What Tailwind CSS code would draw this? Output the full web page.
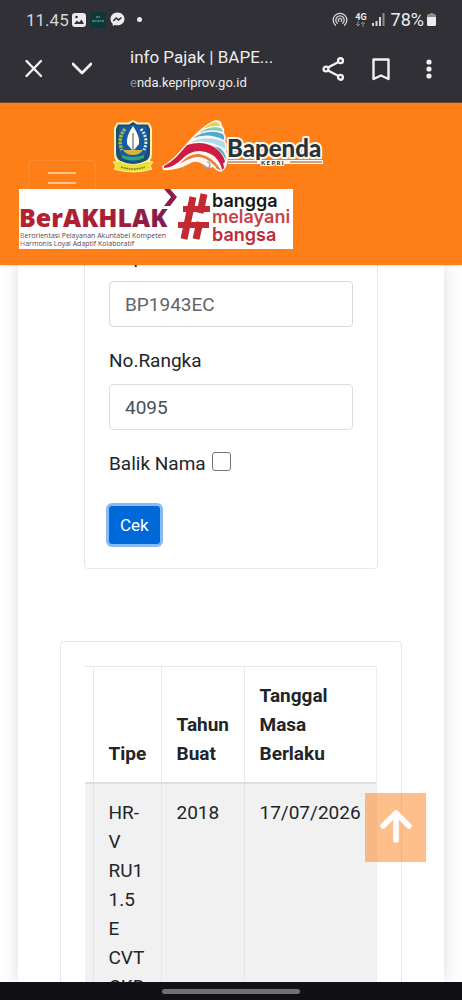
<!DOCTYPE html>
<html lang="id">
<head>
  <meta charset="UTF-8" />
  <meta name="viewport" content="width=device-width, initial-scale=1.0" />
  <title>info Pajak | BAPENDA</title>
  <script src="https://cdn.jsdelivr.net/npm/@tailwindcss/browser@4"></script>
</head>
<body class="h-screen flex flex-col overflow-hidden bg-white font-[Roboto,sans-serif] text-[19px] leading-[29px] text-[#212529]">

  <!-- Phone status + browser bar -->
  <div class="shrink-0 h-[103px] bg-[#303036] text-[#ececee] border-b border-[#6b4630]">
    <div class="h-[39px] flex items-center px-[26px] text-[17px] leading-5">
      <span class="text-[#d6d6d8]">11.45</span>
      <svg class="ml-[3px] w-[14px] h-[14px]" viewBox="0 0 14 14">
        <rect width="14" height="14" rx="3" fill="#ececee"/>
        <path d="M2 11 L5 7.500 L7 9.500 L9.500 6.500 L12 11Z" fill="#303036"/>
        <circle cx="4.500" cy="4" r="1.300" fill="#303036"/>
      </svg>
      <svg class="ml-1 w-4 h-4" viewBox="0 0 16 16">
        <rect width="16" height="16" rx="2" fill="#0c3a38"/>
        <path d="M6 5H10M2 9H14" stroke="#8fb5b0" stroke-width="1" stroke-dasharray="2 .5"/>
      </svg>
      <svg class="ml-1 w-[15px] h-[15px]" viewBox="0 0 15 15">
        <path d="M7.500 .5C3.500 .5 .5 3.400 .5 7c0 2 .8 3.600 2.200 4.800V14l2-1.100c.9.300 1.800.4 2.800.4 4 0 7-2.700 7-6.300S11.500.5 7.500.5Z" fill="#ececee"/>
        <path d="M3.300 9 L6.200 6 L8.500 7.900 L11.500 5.500" fill="none" stroke="#303036" stroke-width="1.600"/>
      </svg>
      <span class="ml-3 w-[5px] h-[5px] rounded-full bg-[#ececee]"></span>

      <svg class="ml-auto w-4 h-4" viewBox="0 0 16 16" fill="none" stroke="#d6d6d8" stroke-width="1.300" stroke-linecap="round">
        <path d="M3.500 13.200A6.800 6.800 0 1 1 12.500 13.200"/>
        <path d="M5.300 11.300A4.200 4.200 0 1 1 10.700 11.300"/>
        <path d="M6.800 9.300A1.700 1.700 0 1 1 9.200 9.300"/>
      </svg>
      <div class="ml-[7px] flex flex-col items-center">
        <span class="text-[9px] leading-[8px] font-bold">4G</span>
        <svg class="w-[11px] h-[6px]" viewBox="0 0 11 6" fill="none" stroke="#8b8b90" stroke-width="1">
          <path d="M3 0V5M1 3L3 5L5 3M8 6V1M6 3L8 1L10 3"/>
        </svg>
      </div>
      <svg class="ml-[5px] w-[13px] h-[13px]" viewBox="0 0 13 13">
        <path d="M0 10h2v3H0zM3.500 8h2v5h-2zM7 4h2v9H7z" fill="#d6d6d8"/>
        <path d="M10.500 0h2v13h-2z" fill="#8b8b90"/>
      </svg>
      <span class="ml-[6px] text-[18px]">78%</span>
      <svg class="ml-[3px] w-[9px] h-[13px]" viewBox="0 0 9 13">
        <path d="M3 0h3v1.500h1.500A1.500 1.500 0 0 1 9 3v8.500A1.500 1.500 0 0 1 7.500 13h-6A1.500 1.500 0 0 1 0 11.500V3A1.500 1.500 0 0 1 1.500 1.500H3Z" fill="#ececee"/>
        <path d="M3 0h3v1.500h1.500A1.500 1.500 0 0 1 9 3v1H0V3A1.500 1.500 0 0 1 1.500 1.500H3Z" fill="#8b8b90"/>
      </svg>
    </div>

    <div class="h-[60px] flex items-center pl-6 pr-[30px]">
      <button type="button" aria-label="Tutup">
        <svg class="w-5 h-5" viewBox="0 0 20 20" fill="none" stroke="#f2f2f4" stroke-width="2.400" stroke-linecap="round">
          <path d="M2.500 2L17 17M17 2L2.500 17"/>
        </svg>
      </button>
      <button type="button" aria-label="Perkecil" class="ml-7">
        <svg class="w-5 h-5" viewBox="0 0 20 20" fill="none" stroke="#f2f2f4" stroke-width="2.800" stroke-linecap="round" stroke-linejoin="round">
          <path d="M1 5L10 14L19 5"/>
        </svg>
      </button>
      <div class="ml-[38px] flex-1 min-w-0">
        <p class="text-[17px] leading-7 whitespace-nowrap">info Pajak | BAPE...</p>
        <p class="text-[13px] leading-6 whitespace-nowrap"><span class="text-[#8b8b90]">e</span>nda.kepriprov.go.id</p>
      </div>
      <div class="flex items-center">
        <button type="button" aria-label="Bagikan">
          <svg class="w-6 h-6" viewBox="0 0 24 24" fill="none" stroke="#f2f2f4" stroke-width="2.400">
            <path d="M6 10.500L16.500 5M6 13.500L16.500 19"/>
            <circle cx="4" cy="12" r="2.400"/><circle cx="18.500" cy="3.700" r="2.400"/><circle cx="18.500" cy="20.300" r="2.400"/>
          </svg>
        </button>
        <button type="button" aria-label="Simpan" class="ml-[26px]">
          <svg class="w-[18px] h-6" viewBox="0 0 18 24" fill="none" stroke="#f2f2f4" stroke-width="2.400">
            <path d="M1.500 2.500H16.500V22L9 18.500L1.500 22Z" stroke-linejoin="round"/>
          </svg>
        </button>
        <button type="button" aria-label="Menu" class="ml-9">
          <svg class="w-[6px] h-6" viewBox="0 0 6 24" fill="#f2f2f4">
            <circle cx="3" cy="5" r="2.600"/><circle cx="3" cy="12" r="2.600"/><circle cx="3" cy="19" r="2.600"/>
          </svg>
        </button>
      </div>
    </div>
  </div>

  <!-- Site header -->
  <header class="relative z-10 shrink-0 bg-[#fe7f17] pt-4 pb-4 pr-[26px] shadow-sm">
    <button type="button" aria-label="Navigasi" class="absolute left-7 top-[57px] w-[68px] h-[50px] rounded border border-white/10 flex flex-col items-center gap-2 pt-[11px]">
      <span class="w-7 h-[2px] bg-[#ffc48c]"></span>
      <span class="w-7 h-[2px] bg-[#ffc48c]"></span>
    </button>

    <a href="#" class="flex justify-center" aria-label="Bapenda Kepri">
      <!-- Province crest -->
      <svg class="w-[42px] h-[54px]" viewBox="0 0 42 54">
        <path d="M21 1L26 3.500H37L40 9V35Q40 43 32 46L21 51L10 46Q2 43 2 35V9L5 3.500H16Z" fill="#f5f0b8"/>
        <path d="M21 3L25 5.500H36L38 10V34Q38 41 31 43L21 47L11 43Q4 41 4 34V10L6 5.500H17Z" fill="#1c4f6e"/>
        <path d="M21 6L35 8V32Q34 40 21 43Q8 40 7 32V8Z" fill="#165aa3"/>
        <path d="M13 10Q5 20 10 31" fill="none" stroke="#a3bd3a" stroke-width="3.500" stroke-dasharray="2.500 1"/>
        <path d="M29 10Q37 20 32 31" fill="none" stroke="#e8eee0" stroke-width="3" stroke-dasharray="2 1.500"/>
        <path d="M21 7Q14 17 15 25L20 31H22L27 25Q28 17 21 7Z" fill="#fffbe8"/>
        <path d="M21 14V31" stroke="#165aa3" stroke-width="1"/>
        <path d="M11 31H31Q28 36 21 36T11 31Z" fill="#d9b43a"/>
        <path d="M10 36Q21 40 32 36V39Q21 44 10 39Z" fill="#34a37c"/>
        <path d="M1 43L7 42Q21 49 35 42L41 43L38 47L40 50Q21 56 2 50L4 47Z" fill="#eee030" stroke="#f8f3b0" stroke-width="1"/>
        <path d="M9 48Q21 52 33 48" fill="none" stroke="#7c8a24" stroke-width="1.500" stroke-dasharray="2 .6"/>
      </svg>
      <!-- Bapenda mark -->
      <svg class="ml-2 w-[162px] h-[54px]" viewBox="0 0 162 54">
        <path d="M0 47C9 43 17 33 25 24C33 15 44 4 54 1Q60 1 60 7Q63 10 62 14Q65 18 63 22Q66 27 64 32Q67 39 65 45Q63 51 59 53Q54 52 51 48Q46 50 42 46Q34 40 27 45Q14 52 1 51Z" fill="#fff8f2"/>
        <path d="M41 10Q47 4 54 3Q58 4 58 7Q49 6 41 10Z" fill="#d8d64a"/>
        <path d="M37 14Q48 6 59 9Q61 11 61 13Q48 9 37 14Z" fill="#8fc8b4"/>
        <path d="M31 19Q46 9 61 15Q63 18 62 21Q47 13 31 19Z" fill="#4fa9d6"/>
        <path d="M27 24Q45 15 62 23Q64 27 63 30Q46 19 27 24Z" fill="#a9dcee"/>
        <path d="M2 47C12 42 18 34 25 26Q40 21 52 28Q60 33 63 42Q62 46 59 43Q50 33 38 32Q27 32 19 41Q12 48 2 49Z" fill="#cc1c42"/>
        <path d="M58 29Q64 34 64 41Q60 33 52 27Z" fill="#57b4dc"/>
        <path d="M18 45Q27 34 37 35Q50 37 59 51Q55 51 53 47Q43 37 35 38Q27 39 18 45Z" fill="#ef7b35"/>
        <path d="M56 38Q62 43 62 49L60 51Q59 44 53 38Z" fill="#c31f48"/>
        <path d="M45 43a3 3 0 1 1-3 3" fill="none" stroke="#8fa0c8" stroke-width="1.200"/>
        <text x="65" y="38" font-family="Lato, sans-serif" font-weight="900" font-size="24" fill="#24333d" stroke="#fff8ee" stroke-width="4" paint-order="stroke" stroke-linejoin="round">Bapenda</text>
        <path d="M66 43H161" stroke="#fff8ee" stroke-width="4"/>
        <path d="M66 43H95M128 43H160" stroke="#8c4d33" stroke-width="1"/>
        <text x="99" y="46" font-family="Lato, sans-serif" font-weight="900" font-size="6" fill="#24333d" stroke="#fff8ee" stroke-width="2" paint-order="stroke">K E P R I</text>
      </svg>
    </a>

    <!-- BerAKHLAK banner -->
    <svg class="relative mt-4 ml-[19px] w-[274px] h-[60px]" viewBox="0 0 274 60" role="img" aria-label="BerAKHLAK bangga melayani bangsa">
      <defs>
        <linearGradient id="akhlak" x1="0" x2="1">
          <stop offset="0" stop-color="#b52233"/>
          <stop offset=".6" stop-color="#a81f36"/>
          <stop offset="1" stop-color="#801a51"/>
        </linearGradient>
      </defs>
      <rect width="274" height="60" fill="#fff"/>
      <text x="0" y="38" font-family="Open Sans, sans-serif" font-weight="800" font-size="25" fill="url(#akhlak)">BerAKHLAK</text>
      <path d="M145 0H151L158 8L151 17H145L152 8Z" fill="#8d1b4b"/>
      <g font-family="Open Sans, sans-serif" font-size="7" fill="#5b4548">
        <text x="1" y="49"><tspan fill="#c84a55">B</tspan>erorientasi Pelayanan Akuntabel Kompeten</text>
        <text x="1" y="57"><tspan fill="#c84a55">H</tspan>armonis Loyal Adaptif Kolaboratif</text>
      </g>
      <!-- hash sign -->
      <path d="M174 8L165 50M185 5L181 24M181 33L177 50" fill="none" stroke="#c42830" stroke-width="7"/>
      <path d="M164 20H191M159 36H190" fill="none" stroke="#c42830" stroke-width="6"/>
      <g font-family="Inter, sans-serif" font-weight="600" font-size="18">
        <text x="193" y="18" fill="#171717">bangga</text>
        <text x="193" y="34" fill="#c8424a">melayani</text>
        <text x="193" y="52" fill="#bf2b35">bangsa</text>
      </g>
    </svg>
  </header>

  <!-- Page content, scrolled under the header -->
  <main class="flex-1 min-h-0 overflow-hidden bg-white px-[18px]">
    <div class="h-full bg-white shadow-[0_0_16px_rgba(0,0,0,0.15)]">
      <div class="px-[42px]">
        <form class="relative -top-12 -mb-12 mx-6 px-6 pt-6 pb-6 border border-[#e7e7e7] rounded" onsubmit="return false">
          <label for="nopol" class="block">Nopol</label>
          <input id="nopol" type="text" value="BP1943EC" class="mt-[10px] block w-full h-[46px] px-[15px] border border-[#d5d9dd] rounded bg-white text-[#5f6468] outline-none" />
          <label for="rangka" class="mt-[19px] block">No.Rangka</label>
          <input id="rangka" type="text" value="4095" class="mt-[9px] block w-full h-[46px] px-[15px] border border-[#dcdfe2] rounded bg-white text-[#495057] outline-none" />
          <div class="mt-[19px] flex items-center">
            <label for="balik">Balik Nama</label>
            <input id="balik" type="checkbox" class="ml-[6px] mb-1 w-[19px] h-[19px] appearance-none border border-[#767676] rounded-[3px] bg-white" />
          </div>
          <button type="submit" class="mt-7 block h-[38px] px-[11px] rounded-[3px] bg-[#0069d9] text-[17px] text-white ring-3 ring-[#86bbf7]">Cek</button>
        </form>

        <div class="mt-[72px] px-6 pt-6 border border-[#e7e7e7] rounded">
          <div class="h-[400px] overflow-hidden flex justify-end border-r border-[#eeeeee]">
            <table class="w-full border-collapse table-fixed">
              <colgroup>
                <col class="w-2" /><col class="w-[68px]" /><col class="w-[83px]" /><col />
              </colgroup>
              <thead>
                <tr class="align-bottom text-left font-bold border-t border-b-2 border-[#e6e6e6] border-b-[#dcdee0]">
                  <th></th>
                  <th class="border-l border-[#e6e8ea] py-[14px] px-[15px]">Tipe</th>
                  <th class="border-l border-[#e6e8ea] py-[14px] px-[15px]">Tahun Buat</th>
                  <th class="border-l border-[#e6e8ea] py-[14px] pl-[15px] pr-10">Tanggal Masa Berlaku</th>
                </tr>
              </thead>
              <tbody>
                <tr class="align-top bg-[#f1f1f1]">
                  <td></td>
                  <td class="border-l border-[#e4e6e8] py-[14px] px-[15px]">HR-V RU1 1.5 E CVT CKD</td>
                  <td class="border-l border-[#e4e6e8] py-[14px] px-[15px]">2018</td>
                  <td class="border-l border-[#e4e6e8] py-[14px] pl-[15px] whitespace-nowrap">17/07/2026</td>
                </tr>
              </tbody>
            </table>
          </div>
        </div>
      </div>
    </div>
  </main>

  <!-- Back to top -->
  <a href="#" aria-label="Kembali ke atas" class="fixed right-9 bottom-[138px] z-20 w-[61px] h-[69px] flex items-center justify-center bg-[#fe7f17]/50">
    <svg class="w-8 h-9" viewBox="0 0 32 36" fill="none" stroke="#fff" stroke-width="5.500">
      <path d="M16 4V30" stroke-linecap="round"/>
      <path d="M3 16L16 3L29 16" stroke-linecap="round" stroke-linejoin="round"/>
    </svg>
  </a>

  <!-- Gesture bar -->
  <div class="relative z-30 shrink-0 h-[18px] bg-[#111115] flex items-center justify-center">
    <span class="w-[138px] h-[5px] rounded-full bg-[#707073]"></span>
  </div>
</body>
</html>
